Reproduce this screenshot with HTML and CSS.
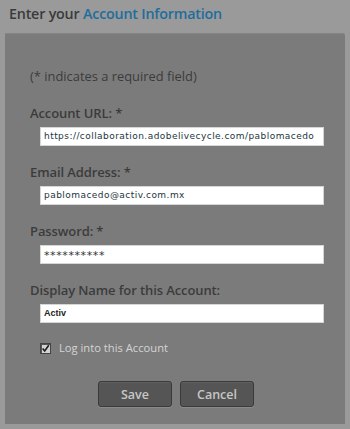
FILE: index.html
```html
<!DOCTYPE html>
<html>
<head>
<meta charset="utf-8">
<link rel="stylesheet" href="styles.css">
</head>
<body>
<h1 class="title">Enter your <span class="accent">Account Information</span></h1>
<div class="panel">
  <p class="note">(* indicates a required field)</p>
  <div class="field">
    <div class="label">Account URL: *</div>
    <div class="input">https://collaboration.adobelivecycle.com/pablomacedo</div>
  </div>
  <div class="field">
    <div class="label">Email Address: *</div>
    <div class="input">pablomacedo@activ.com.mx</div>
  </div>
  <div class="field">
    <div class="label">Password: *</div>
    <div class="input pw">**********</div>
  </div>
  <div class="field">
    <div class="label">Display Name for this Account:</div>
    <div class="input name">Activ</div>
  </div>
  <div class="check">
    <span class="box"><svg width="11" height="11" viewBox="0 0 11 11"><path d="M2 5.5 L4.5 8.5 L9.5 1.5" fill="none" stroke="#1c1c1c" stroke-width="2"/></svg></span>
    <span class="check-label">Log into this Account</span>
  </div>
  <div class="buttons">
    <button class="btn">Save</button>
    <button class="btn">Cancel</button>
  </div>
</div>
</body>
</html>
```
FILE: styles.css
```css
html, body {
  margin: 0;
  padding: 0;
}
body {
  width: 350px;
  height: 429px;
  background: #9a9a9a;
  font-family: "Open Sans", "Noto Sans", sans-serif;
  overflow: hidden;
}
.title {
  margin: 0;
  padding: 4px 0 0 9px;
  height: 33px;
  box-sizing: border-box;
  font-size: 14.3px;
  font-weight: 600;
  color: #3a3a3a;
  line-height: 19px;
  letter-spacing: -0.2px;
}
.accent {
  color: #1f6d9c;
}
.panel {
  margin: 0 0 0 5px;
  width: 340px;
  height: 391px;
  background: #7b7b7b;
  border-radius: 0 3px 0 0;
  box-shadow: inset 0 1px 0 #858585;
  padding: 34px 0 0 25px;
  box-sizing: border-box;
}
.note {
  margin: 0;
  font-size: 12.9px;
  line-height: 18px;
  color: #3b3b3b;
}
.field {
  margin-top: 19px;
}
.field + .field {
  margin-top: 17px;
}
.label {
  font-size: 13px;
  line-height: 18px;
  color: #3b3b3b;
  font-weight: 600;
  letter-spacing: -0.1px;
}
.input {
  margin: 5px 0 0 10px;
  width: 284px;
  height: 19px;
  box-sizing: border-box;
  background: #fff;
  border: 1px solid #d6d6d6;
  font-family: "DejaVu Sans", sans-serif;
  font-size: 9px;
  letter-spacing: 0.45px;
  line-height: 17px;
  padding-left: 3px;
  color: #1b3540;
}
.input.pw {
  font-size: 11px;
  letter-spacing: 0.6px;
  line-height: 19px;
  color: #333;
}
.input.name {
  font-family: "Liberation Sans", sans-serif;
  font-size: 9px;
  font-weight: bold;
  letter-spacing: 0;
  color: #222;
}
.check {
  margin: 17px 0 0 10px;
  display: flex;
  align-items: center;
  gap: 8px;
}
.box {
  width: 11px;
  height: 11px;
  background: #d2d2d2;
  border: 1px solid #444;
  box-sizing: border-box;
  display: flex;
  align-items: center;
  justify-content: center;
  box-shadow: inset 1px 1px 0 #555;
}
.box svg {
  display: block;
}
.check-label {
  font-size: 11.2px;
  color: #d4d4d4;
  line-height: 16px;
}
.buttons {
  display: flex;
  gap: 8px;
  margin: 25px 0 0 68px;
}
.btn {
  width: 74px;
  height: 26px;
  background: #555555;
  border: 1px solid #3a3a3a;
  border-radius: 3px;
  box-shadow: inset 0 1px 0 #606060, 0 1px 0 #8a8a8a;
  color: #c6c6c6;
  font-family: "Open Sans", "Noto Sans", sans-serif;
  font-size: 12.5px;
  font-weight: 600;
  padding: 0;
}
```
